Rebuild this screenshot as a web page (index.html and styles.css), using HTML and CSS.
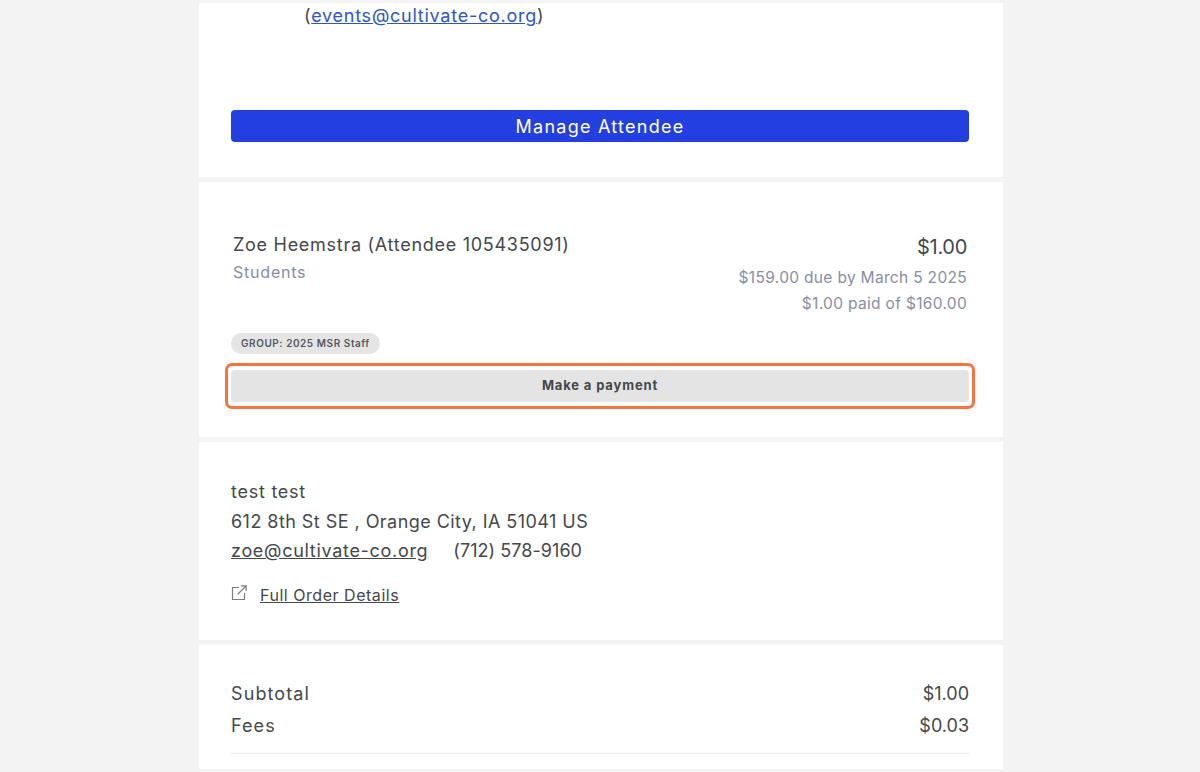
FILE: index.html
```html
<!DOCTYPE html>
<html lang="en">
<head>
<meta charset="utf-8">
<title>Order</title>
<link rel="stylesheet" href="styles.css">
</head>
<body>
<main class="page">
  <section class="card card-manage">
    <p class="contact">(<a class="blue" href="#">events@cultivate-co.org</a>)</p>
    <a class="btn-primary" href="#">Manage Attendee</a>
  </section>
  <section class="card card-attendee">
    <div class="att-row">
      <div>
        <div class="att-name">Zoe Heemstra (Attendee 105435091)</div>
        <div class="att-type">Students</div>
      </div>
      <div class="att-right">
        <div class="att-price">$1.00</div>
        <div class="att-due">$159.00 due by March 5 2025</div>
        <div class="att-due">$1.00 paid of $160.00</div>
      </div>
    </div>
    <span class="tag">GROUP: 2025 MSR Staff</span>
    <div class="highlight"><a class="btn-grey" href="#">Make a payment</a></div>
  </section>
  <section class="card card-buyer">
    <div class="line line-name">test test</div>
    <div class="line">612 8th St SE , Orange City, IA 51041 US</div>
    <div class="line"><a class="plain email" href="#">zoe@cultivate-co.org</a><span class="phone">(712) 578-9160</span></div>
    <div class="details">
      <svg class="ext" viewBox="0 0 18 18" width="18" height="18" fill="none" stroke="#7b7e83" stroke-width="1.2">
        <path d="M9 3.5H2.5v12h12V9"/>
        <path d="M7.5 10.5 16 2M11 1.8h5.2V7"/>
      </svg>
      <a class="plain small" href="#">Full Order Details</a>
    </div>
  </section>
  <section class="card card-totals">
    <div class="total"><span class="label">Subtotal</span><span>$1.00</span></div>
    <div class="total"><span class="label">Fees</span><span>$0.03</span></div>
    <div class="rule"></div>
  </section>
</main>
</body>
</html>
```
FILE: styles.css
```css
* { box-sizing: border-box; }
html, body { margin: 0; height: 100%; overflow: hidden; }
body {
  background: #f3f3f4;
  color: #44474c;
  font-family: Inter, "Liberation Sans", sans-serif;
}
a { color: inherit; }
.page {
  width: 804px;
  margin: 0 auto;
  padding-top: 3px;
  display: flex;
  flex-direction: column;
  gap: 5px;
  transform: translateX(1px);
}
.card { background: #fff; padding-left: 32px; padding-right: 34px; }
.card-manage { height: 174px; }
.contact { margin: 0; padding: 1px 0 0 73px; font-size: 18px; line-height: 24px; letter-spacing: 0.75px; }
.blue { color: #2f55c8; }
.btn-primary {
  display: block;
  margin-top: 82px;
  height: 32px;
  line-height: 34px;
  border-radius: 4px;
  background: #233fe0;
  color: #fff;
  text-align: center;
  text-decoration: none;
  font-size: 18px;
  letter-spacing: 1.25px;
}
.card-attendee { height: 255px; padding-top: 50px; }
.att-row { display: flex; justify-content: space-between; height: 94px; padding: 0 2px; }
.att-name { font-size: 18px; line-height: 26px; letter-spacing: 0.72px; }
.att-type { margin-top: 1px; font-size: 16px; line-height: 26px; letter-spacing: 0.78px; color: #868ea8; }
.att-right { text-align: right; padding-top: 2px; }
.att-price { font-size: 20px; line-height: 26px; letter-spacing: -0.3px; margin-bottom: 5px; }
.att-due { font-size: 15.5px; line-height: 26px; letter-spacing: 0.32px; color: #868ea8; }
.tag {
  display: inline-block;
  margin-top: 7px;
  height: 21px;
  line-height: 21px;
  padding: 0 10px;
  border-radius: 11px;
  background: #e5e5e5;
  color: #55585c;
  font-size: 10px;
  font-weight: 600;
  letter-spacing: 0.56px;
  vertical-align: top;
}
.highlight {
  margin: 9px -6px 0;
  padding: 4px 3px 3px;
  height: 46px;
  border: 3px solid #fb7140;
  border-radius: 7px;
}
.btn-grey {
  display: block;
  height: 32px;
  line-height: 31px;
  border-radius: 4px;
  background: #e4e4e4;
  text-align: center;
  text-decoration: none;
  font-size: 13px;
  font-weight: 700;
  letter-spacing: 0.85px;
}
.card-buyer { height: 198px; padding-top: 36px; }
.line { font-size: 18px; line-height: 29.5px; letter-spacing: 0.45px; }
.line-name { line-height: 28.5px; letter-spacing: 0.75px; }
.email { letter-spacing: 0.7px; }
.phone { margin-left: 25px; letter-spacing: 0.05px; }
.plain { color: #44474c; }
.details { display: flex; align-items: center; margin-top: 18px; height: 22px; }
.ext { display: block; margin-right: 12px; margin-top: -3px; margin-left: -1px; }
.small { font-size: 16px; letter-spacing: 0.53px; }
.card-totals { height: 124px; padding-top: 33px; }
.total { display: flex; justify-content: space-between; font-size: 18px; line-height: 32px; }
.label { letter-spacing: 1.1px; }
.rule { margin-top: 11px; height: 1px; background: #e9e9ec; }
```
